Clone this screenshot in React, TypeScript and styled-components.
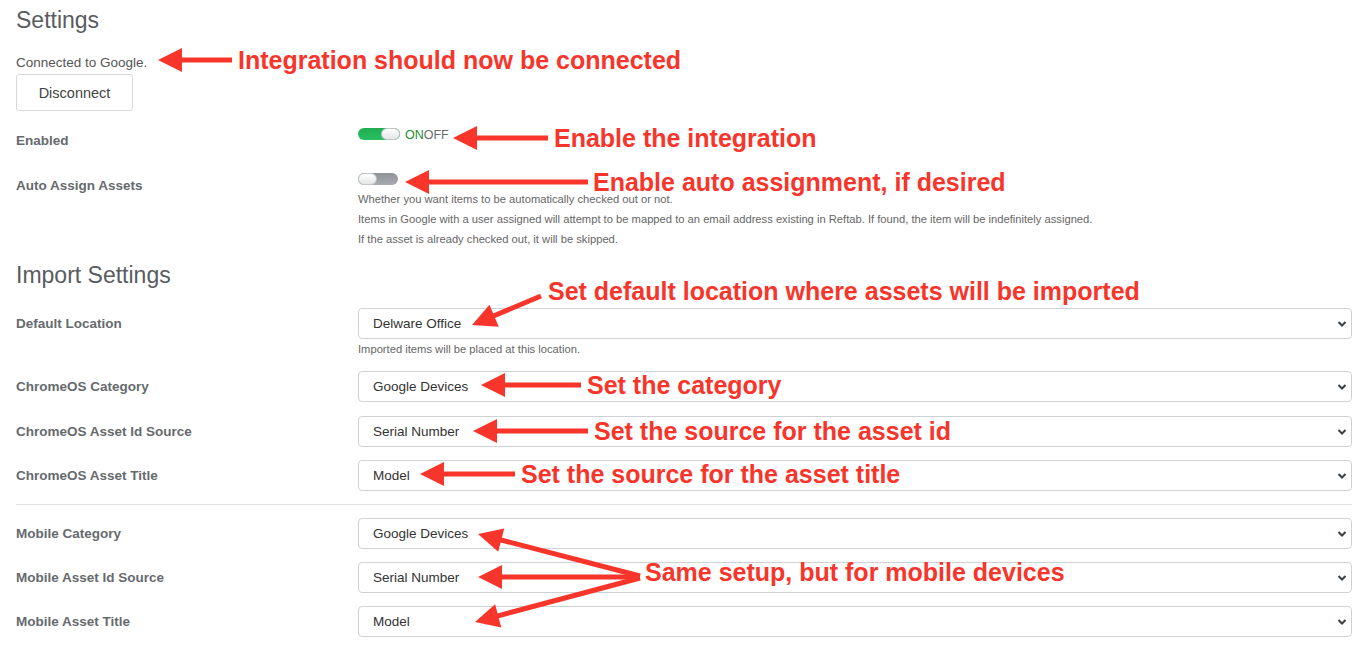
import styled, { createGlobalStyle } from "styled-components";

const GlobalStyle = createGlobalStyle`
  html, body {
    margin: 0;
    padding: 0;
    background: #ffffff;
  }
  body {
    font-family: "Liberation Sans", Arial, sans-serif;
  }
`;

const RED = "#f8352a";

type Point = [number, number];

interface ArrowSpec {
  tip: Point;
  tail: Point;
}

const arrows: ArrowSpec[] = [
  { tip: [158, 60], tail: [232, 60] },
  { tip: [453, 138], tail: [548, 138] },
  { tip: [405, 182], tail: [588, 182] },
  { tip: [472, 325], tail: [541, 296] },
  { tip: [481, 385], tail: [581, 385] },
  { tip: [473, 431], tail: [588, 431] },
  { tip: [420, 474], tail: [515, 474] },
  { tip: [478, 534], tail: [640, 576] },
  { tip: [478, 577], tail: [640, 577] },
  { tip: [475, 622], tail: [640, 578] },
];

const callouts = [
  { x: 238, y: 61, text: "Integration should now be connected" },
  { x: 554, y: 139, text: "Enable the integration" },
  { x: 593, y: 183, text: "Enable auto assignment, if desired" },
  { x: 548, y: 292, text: "Set default location where assets will be imported" },
  { x: 587, y: 386, text: "Set the category" },
  { x: 594, y: 432, text: "Set the source for the asset id" },
  { x: 521, y: 475, text: "Set the source for the asset title" },
  { x: 645, y: 573, text: "Same setup, but for mobile devices" },
];

const Arrow = ({ tip, tail }: ArrowSpec) => {
  const dx = tail[0] - tip[0];
  const dy = tail[1] - tip[1];
  const len = Math.hypot(dx, dy);
  const ux = dx / len;
  const uy = dy / len;
  const headLen = 24;
  const half = 12;
  const bx = tip[0] + ux * headLen;
  const by = tip[1] + uy * headLen;
  const nx = -uy;
  const ny = ux;
  const pts = [
    `${tip[0]},${tip[1]}`,
    `${bx + nx * half},${by + ny * half}`,
    `${bx - nx * half},${by - ny * half}`,
  ].join(" ");
  return (
    <g>
      <line
        x1={bx - ux * 2}
        y1={by - uy * 2}
        x2={tail[0]}
        y2={tail[1]}
        stroke={RED}
        strokeWidth={5}
      />
      <polygon points={pts} fill={RED} />
    </g>
  );
};

const Page = styled.div`
  position: relative;
  box-sizing: border-box;
  width: 1370px;
  height: 649px;
  padding: 6px 18px 0 16px;
  overflow: hidden;
`;

const Heading = styled.h2<{ $mt?: number }>`
  margin: ${(p) => p.$mt ?? 0}px 0 0;
  font-size: 23px;
  line-height: 28px;
  font-weight: 400;
  color: #585c60;
`;

const StatusText = styled.div`
  margin-top: 20px;
  font-size: 13.5px;
  line-height: 18px;
  color: #555;
`;

const DisconnectButton = styled.button`
  display: block;
  margin-top: 2px;
  width: 117px;
  height: 37px;
  padding: 0;
  background: #ffffff;
  border: 1px solid #d6d8db;
  border-radius: 3px;
  font-family: inherit;
  font-size: 14.5px;
  color: #444;
`;

const FieldRow = styled.div<{ $mt: number }>`
  display: grid;
  grid-template-columns: 342px 1fr;
  align-items: start;
  margin-top: ${(p) => p.$mt}px;
`;

const Label = styled.div<{ $compact?: boolean }>`
  font-size: 13.5px;
  font-weight: 700;
  color: #666a6e;
  line-height: ${(p) => (p.$compact ? "16px" : "31px")};
  padding-top: ${(p) => (p.$compact ? "7px" : "0")};
`;

const ControlCol = styled.div`
  display: flex;
  flex-direction: column;
`;

const ToggleLine = styled.div`
  display: flex;
  align-items: center;
  height: 16px;
  gap: 5px;
`;

const Track = styled.div<{ $on: boolean; $width: number }>`
  display: flex;
  justify-content: ${(p) => (p.$on ? "flex-end" : "flex-start")};
  width: ${(p) => p.$width}px;
  height: 12px;
  border-radius: 6px;
  background: ${(p) =>
    p.$on
      ? "linear-gradient(#1fae52, #27c062)"
      : "linear-gradient(#8e9296, #a7abaf)"};
`;

const Knob = styled.div`
  width: 19px;
  height: 12px;
  box-sizing: border-box;
  border-radius: 6px;
  border: 1px solid #c4c6c8;
  background: linear-gradient(#ffffff, #e4e5e6);
`;

const OnOff = styled.span`
  font-size: 12.5px;
  line-height: 16px;
  padding-top: 2px;
`;

const OnText = styled.span`
  color: #1c8f2c;
`;

const OffText = styled.span`
  color: #6a6a6a;
`;

const HelpList = styled.div`
  margin-top: 2px;
  display: flex;
  flex-direction: column;
`;

const HelpText = styled.div<{ $lh?: number; $mt?: number }>`
  font-size: 11.2px;
  line-height: ${(p) => p.$lh ?? 20}px;
  margin-top: ${(p) => p.$mt ?? 0}px;
  color: #666;
`;

const SelectWrap = styled.div`
  position: relative;
  height: 31px;
`;

const Select = styled.select`
  appearance: none;
  -webkit-appearance: none;
  width: 100%;
  height: 31px;
  box-sizing: border-box;
  padding: 0 30px 0 14px;
  border: 1px solid #ced2d6;
  border-radius: 4px;
  background: #ffffff;
  font-family: inherit;
  font-size: 13.5px;
  color: #333;
`;

const Chevron = styled.svg`
  position: absolute;
  right: 5px;
  top: 12px;
  width: 10px;
  height: 8px;
  pointer-events: none;
`;

const Divider = styled.hr`
  margin: 13px 0 0;
  border: 0;
  border-top: 1px solid #dfe2e5;
`;

const Overlay = styled.svg`
  position: absolute;
  left: 0;
  top: 0;
  width: 1370px;
  height: 649px;
  pointer-events: none;
`;

const Callout = styled.span<{ $x: number; $y: number }>`
  position: absolute;
  left: ${(p) => p.$x}px;
  top: ${(p) => p.$y - 13}px;
  font-size: 25px;
  line-height: 25px;
  font-weight: 700;
  color: ${RED};
  white-space: nowrap;
  pointer-events: none;
`;

const Dropdown = ({ value }: { value: string }) => (
  <SelectWrap>
    <Select defaultValue={value}>
      <option>{value}</option>
    </Select>
    <Chevron viewBox="0 0 10 8">
      <path d="M1.5 2l3.5 3.5L8.5 2" fill="none" stroke="#3a3f44" strokeWidth="2" />
    </Chevron>
  </SelectWrap>
);

const Toggle = ({ on, width }: { on: boolean; width: number }) => (
  <Track $on={on} $width={width}>
    <Knob />
  </Track>
);

export default function App() {
  return (
    <>
      <GlobalStyle />
      <Page>
        <Heading>Settings</Heading>
        <StatusText>Connected to Google.</StatusText>
        <DisconnectButton>Disconnect</DisconnectButton>

        <FieldRow $mt={15}>
          <Label $compact>Enabled</Label>
          <ControlCol>
            <ToggleLine>
              <Toggle on width={42} />
              <OnOff>
                <OnText>ON</OnText>
                <OffText>OFF</OffText>
              </OnOff>
            </ToggleLine>
          </ControlCol>
        </FieldRow>

        <FieldRow $mt={22}>
          <Label $compact>Auto Assign Assets</Label>
          <ControlCol>
            <ToggleLine>
              <Toggle on={false} width={40} />
            </ToggleLine>
            <HelpList>
              <HelpText>Whether you want items to be automatically checked out or not.</HelpText>
              <HelpText>
                Items in Google with a user assigned will attempt to be mapped to an email address
                existing in Reftab. If found, the item will be indefinitely assigned.
              </HelpText>
              <HelpText>If the asset is already checked out, it will be skipped.</HelpText>
            </HelpList>
          </ControlCol>
        </FieldRow>

        <Heading $mt={12}>Import Settings</Heading>

        <FieldRow $mt={19}>
          <Label>Default Location</Label>
          <ControlCol>
            <Dropdown value="Delware Office" />
            <HelpText $lh={14} $mt={3}>
              Imported items will be placed at this location.
            </HelpText>
          </ControlCol>
        </FieldRow>

        <FieldRow $mt={15}>
          <Label>ChromeOS Category</Label>
          <Dropdown value="Google Devices" />
        </FieldRow>

        <FieldRow $mt={14}>
          <Label>ChromeOS Asset Id Source</Label>
          <Dropdown value="Serial Number" />
        </FieldRow>

        <FieldRow $mt={13}>
          <Label>ChromeOS Asset Title</Label>
          <Dropdown value="Model" />
        </FieldRow>

        <Divider />

        <FieldRow $mt={13}>
          <Label>Mobile Category</Label>
          <Dropdown value="Google Devices" />
        </FieldRow>

        <FieldRow $mt={13}>
          <Label>Mobile Asset Id Source</Label>
          <Dropdown value="Serial Number" />
        </FieldRow>

        <FieldRow $mt={13}>
          <Label>Mobile Asset Title</Label>
          <Dropdown value="Model" />
        </FieldRow>

        <Overlay viewBox="0 0 1370 649">
          {arrows.map((a, i) => (
            <Arrow key={i} tip={a.tip} tail={a.tail} />
          ))}
        </Overlay>
        {callouts.map((c) => (
          <Callout key={c.text} $x={c.x} $y={c.y}>
            {c.text}
          </Callout>
        ))}
      </Page>
    </>
  );
}
